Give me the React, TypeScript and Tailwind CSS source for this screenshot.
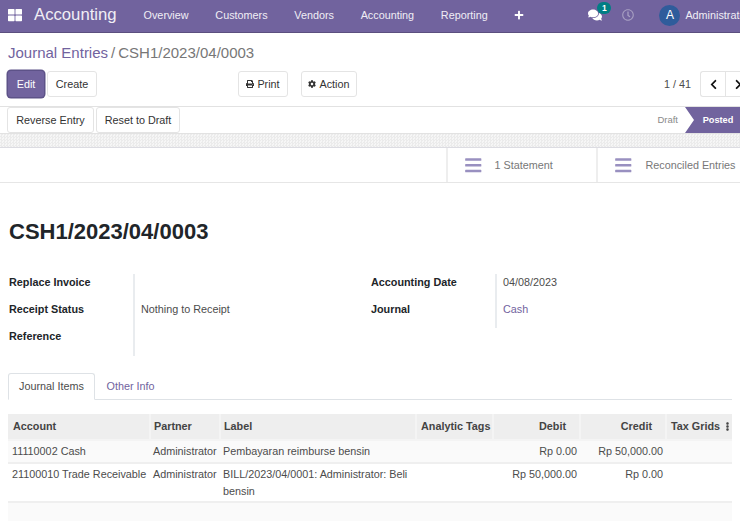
import { FaBars, FaChevronLeft, FaChevronRight, FaCog, FaComments, FaEllipsisV, FaPlus, FaPrint, FaRegClock, FaThLarge } from 'react-icons/fa'

const menu = ['Overview', 'Customers', 'Vendors', 'Accounting', 'Reporting']

const leftFields = [
  { label: 'Replace Invoice', value: '' },
  { label: 'Receipt Status', value: 'Nothing to Receipt' },
  { label: 'Reference', value: '' }
]

const rows = [
  { account: '11110002 Cash', partner: 'Administrator', label: 'Pembayaran reimburse bensin', debit: 'Rp 0.00', credit: 'Rp 50,000.00', rowClass: 'h-[23px] bg-[#fafafa]' },
  { account: '21100010 Trade Receivable', partner: 'Administrator', label: 'BILL/2023/04/0001: Administrator: Beli bensin', debit: 'Rp 50,000.00', credit: 'Rp 0.00', rowClass: 'h-[39px] bg-white' }
]

function Btn({ children, className = '' }: { children: React.ReactNode; className?: string }) {
  return (
    <button className={`flex h-[26px] items-center justify-center rounded-[3px] border border-[#e4e4e4] bg-white text-[#333] ${className}`}>
      {children}
    </button>
  )
}

export default function App() {
  return (
    <div className="h-[521px] w-[740px] overflow-hidden bg-white font-['Liberation_Sans',Arial,sans-serif] text-[10.8px] text-[#4c4c4c]">
      {/* Top bar */}
      <nav className="flex h-[33px] items-center overflow-hidden border-b border-[#5b4f7f] bg-[#71639e] pb-[2px] text-[#f0eef5]">
        <FaThLarge className="ml-[8px] shrink-0 text-[14px] text-white" />
        <span className="ml-[12px] shrink-0 text-[16.7px] leading-none">Accounting</span>
        <div className="ml-[27px] flex shrink-0 items-center gap-[26.75px]">
          {menu.map(item => (
            <span key={item}>{item}</span>
          ))}
          <FaPlus className="shrink-0 text-[10px] text-white" />
        </div>
        <div className="relative ml-[64px] shrink-0">
          <FaComments className="text-[14px] text-white" />
          <span className="absolute left-[9px] top-[-6px] flex h-[12px] w-[14px] items-center justify-center rounded-full bg-[#017e84] text-[8.5px] font-bold text-white">1</span>
        </div>
        <FaRegClock className="ml-[20px] shrink-0 text-[12px] text-[#a79fc2]" />
        <span className="ml-[25px] flex h-[21px] w-[21px] shrink-0 items-center justify-center rounded-full bg-[#2f5c9b] text-[12px] text-white">A</span>
        <span className="ml-[5px] shrink-0 whitespace-nowrap">Administrator</span>
      </nav>

      {/* Control panel */}
      <div className="px-[8px] pt-[11px]">
        <div className="h-[18px] text-[15px] leading-[18px] text-[#777]">
          <span className="text-[#71639e]">Journal Entries</span>
          <span className="mx-[3px]">/</span>
          <span>CSH1/2023/04/0003</span>
        </div>
        <div className="mt-[9px] flex items-center">
          <button className="h-[26px] w-[36px] rounded-[3px] bg-[#71639e] text-white shadow-[0_0_0_1.5px_#5d5288]">Edit</button>
          <Btn className="ml-[3px] w-[50px]">Create</Btn>
          <Btn className="ml-[141px] w-[50px] gap-[3px]">
            <FaPrint className="text-[8px]" />
            Print
          </Btn>
          <Btn className="ml-[13px] w-[56px] gap-[3px]">
            <FaCog className="text-[8px]" />
            Action
          </Btn>
          <span className="ml-auto text-[#4c4c4c]">1 / 41</span>
          <div className="-mr-[18px] ml-[9px] flex h-[26px] w-[50px] shrink-0 overflow-hidden rounded-l-[3px] border border-r-0 border-[#e4e4e4]">
            <span className="flex w-[25px] items-center justify-center border-r border-[#e4e4e4] text-[#111]">
              <FaChevronLeft className="text-[11px]" />
            </span>
            <span className="flex flex-1 items-center justify-center text-[#111]">
              <FaChevronRight className="text-[11px]" />
            </span>
          </div>
        </div>
      </div>

      {/* Status bar */}
      <div className="mt-[9px] flex h-[28px] items-stretch border-y border-[#e2e2e2] pl-[7px]">
        <div className="flex items-center gap-[2px]">
          <Btn className="h-[22px] w-[87px]">Reverse Entry</Btn>
          <Btn className="h-[22px] w-[84px]">Reset to Draft</Btn>
        </div>
        <span className="ml-auto flex items-center pr-[7px] pt-[1px] text-[9.5px] text-[#8a8a8a]">Draft</span>
        <span className="flex w-[55px] items-center justify-center bg-[#71639e] pl-[11px] pt-[2px] text-[9.2px] font-bold text-white [clip-path:polygon(0_0,100%_0,100%_100%,0_100%,9px_50%)]">Posted</span>
      </div>

      {/* Sheet background strip */}
      <div className="h-[14px] border-b border-[#dcdce2] bg-[repeating-conic-gradient(#ebebeb_0_25%,#f6f6f6_0_50%)] bg-[length:3px_3px]" />

      {/* Button box */}
      <div className="flex h-[35px] justify-end border-b border-[#e6e6e6] text-[#777]">
        <div className="flex w-[150px] items-center border-l-2 border-[#eeeeee] pl-[16px]">
          <FaBars className="shrink-0 text-[18.5px] text-[#9990c0]" />
          <span className="ml-[12px]">1 Statement</span>
        </div>
        <div className="flex w-[144px] shrink-0 items-center border-l-2 border-[#eeeeee] pl-[16px]">
          <FaBars className="shrink-0 text-[18.5px] text-[#9990c0]" />
          <span className="ml-[13px] whitespace-nowrap">Reconciled Entries</span>
        </div>
      </div>

      {/* Form */}
      <div className="px-[9px]">
        <h1 className="mt-[36px] text-[22px] font-bold leading-[26px] text-[#212529]">CSH1/2023/04/0003</h1>

        <div className="mt-[29px] flex items-start">
          <div className="grid w-[362px] grid-cols-[124px_1fr] auto-rows-[27.2px] leading-[16px]">
            {leftFields.map(f => (
              <div key={f.label} className="contents">
                <span className="font-bold text-[#212529]">{f.label}</span>
                <span className="border-l-2 border-[#e9ecef] pl-[6px]">{f.value}</span>
              </div>
            ))}
          </div>
          <div className="grid grid-cols-[124px_1fr] auto-rows-[27.2px] leading-[16px]">
            <span className="font-bold text-[#212529]">Accounting Date</span>
            <span className="border-l-2 border-[#e9ecef] pl-[6px]">04/08/2023</span>
            <span className="font-bold text-[#212529]">Journal</span>
            <span className="border-l-2 border-[#e9ecef] pl-[6px] text-[#71639e]">Cash</span>
          </div>
        </div>

        {/* Tabs */}
        <div className="-ml-px mr-[-1px] mt-[17px] flex h-[27px] border-b border-[#dee2e6]">
          <span className="-mb-px flex w-[87px] items-center justify-center rounded-t-[3px] border border-b-white border-[#dee2e6] bg-white">Journal Items</span>
          <span className="flex w-[71px] items-center justify-center pt-[1px] text-[#71639e]">Other Info</span>
        </div>
      </div>

      {/* Journal items */}
      <div className="mt-[14px] px-[8px]">
        <table className="w-[724px] table-fixed border-collapse">
          <colgroup>
            <col className="w-[142px]" />
            <col className="w-[70px]" />
            <col className="w-[196px]" />
            <col className="w-[77px]" />
            <col className="w-[87px]" />
            <col className="w-[86px]" />
            <col className="w-[66px]" />
          </colgroup>
          <thead>
            <tr className="h-[26px] border-b-2 border-[#f4f4f4] bg-[#eeeeee] text-[#444]">
              <th className="border-r-2 border-[#f4f4f4] pl-[5px] text-left">Account</th>
              <th className="border-r-2 border-[#f4f4f4] pl-[3px] text-left">Partner</th>
              <th className="border-r-2 border-[#f4f4f4] pl-[3px] text-left">Label</th>
              <th className="whitespace-nowrap border-r-2 border-[#f4f4f4] pl-[4px] text-left">Analytic Tags</th>
              <th className="border-r-2 border-[#f4f4f4] pr-[13px] text-right">Debit</th>
              <th className="border-r-2 border-[#f4f4f4] pr-[13px] text-right">Credit</th>
              <th className="pl-[4px] text-left">
                <span className="flex items-center whitespace-nowrap">
                  Tax Grids
                  <FaEllipsisV className="ml-[3px] shrink-0 text-[9px]" />
                </span>
              </th>
            </tr>
          </thead>
          <tbody>
            {rows.map(r => (
              <tr key={r.account} className={`border-b-2 border-[#efefef] align-top ${r.rowClass}`}>
                <td className="whitespace-nowrap pl-[4px] pt-[2px] leading-[17px]">{r.account}</td>
                <td className="pl-[3px] pt-[2px] leading-[17px]">{r.partner}</td>
                <td className="pl-[3px] pr-[4px] pt-[2px] leading-[17px]">{r.label}</td>
                <td />
                <td className="pr-[3px] pt-[2px] text-right leading-[17px]">{r.debit}</td>
                <td className="pr-[3px] pt-[2px] text-right leading-[17px]">{r.credit}</td>
                <td />
              </tr>
            ))}
            <tr className="h-[24px] bg-[#fafafa]">
              <td colSpan={7} />
            </tr>
          </tbody>
        </table>
      </div>
    </div>
  )
}
